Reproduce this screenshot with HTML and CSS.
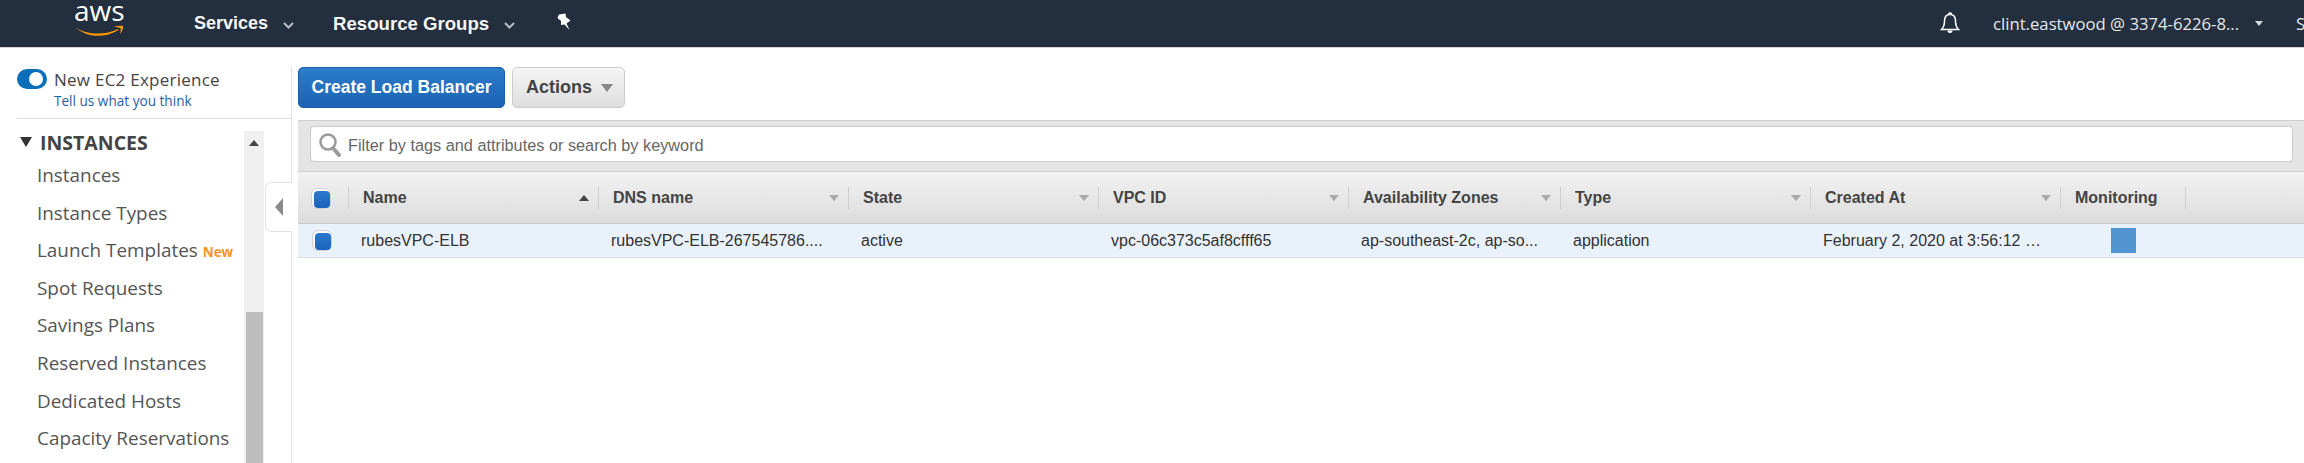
FILE: index.html
```html
<!DOCTYPE html>
<html lang="en">
<head>
	<meta charset="UTF-8">
	<title>Load Balancers</title>
	<link rel="stylesheet" href="styles.css">
</head>
<body>
	<div class="topNav">
		<div class="awsLogo">
			<span class="awsWord">aws</span>
			<svg class="awsSmile" width="50" height="11" viewBox="0 0 50 11"><path d="M0 1.500C8 7 16 8.500 24 8.500C31 8.500 38 7 44 4L44.500 5C38 9 31 10.800 24 10.800C15 10.800 7 7.500 0 1.500Z" fill="#f90"/><path d="M40 1.500C43 .8 47 .5 49 1C49.500 3 48 7 46 9C46.500 7 47 4.500 46.500 3C45 2.500 42.500 2 40 1.500Z" fill="#f90"/></svg>
		</div>
		<a class="navLink navServices">Services</a>
		<svg class="navChevron" width="11" height="7" viewBox="0 0 11 7"><path d="M1 1L5.500 5.500L10 1" fill="none" stroke="#b9bec5" stroke-width="2"/></svg>
		<a class="navLink navGroups">Resource Groups</a>
		<svg class="navChevron" width="11" height="7" viewBox="0 0 11 7"><path d="M1 1L5.500 5.500L10 1" fill="none" stroke="#b9bec5" stroke-width="2"/></svg>
		<svg class="navPin" width="16" height="18" viewBox="0 0 16 18"><path d="M3 1.500L9.500 .5L10 4L14.500 7.500L10.500 10.500L13.500 17L8.500 11.500L5 12L5 8L1.500 5Z" fill="#fff"/></svg>
		<div class="navRight">
			<svg class="navBell" width="20" height="22" viewBox="0 0 20 22"><path d="M10 2.500C6 2.500 4.500 5.500 4.500 9C4.500 13 3.500 15.500 1.500 17.500L18.500 17.500C16.500 15.500 15.500 13 15.500 9C15.500 5.500 14 2.500 10 2.500Z" fill="none" stroke="#fff" stroke-width="1.500"/><path d="M8.500 2.500A1.500 1.500 0 0 1 11.500 2.500" fill="none" stroke="#fff" stroke-width="1.500"/><path d="M7.500 18.500A2.500 2.500 0 0 0 12.500 18.500Z" fill="#fff"/></svg>
			<span class="navUser">clint.eastwood @ 3374-6226-8...</span>
			<i class="navCaret"></i>
			<span class="navCut">S</span>
		</div>
	</div>
	<div class="main">
		<div class="sideBar">
			<div class="expBox">
				<i class="expToggle"></i>
				<div>
					<div class="expTitle">New EC2 Experience</div>
					<a class="expLink">Tell us what you think</a>
				</div>
			</div>
			<div class="menuWrap">
				<div class="menuList">
					<div class="menuHead"><i class="menuArrow"></i>INSTANCES</div>
					<a class="menuItem">Instances</a>
					<a class="menuItem">Instance Types</a>
					<a class="menuItem">Launch Templates <b class="newTag">New</b></a>
					<a class="menuItem">Spot Requests</a>
					<a class="menuItem">Savings Plans</a>
					<a class="menuItem">Reserved Instances</a>
					<a class="menuItem">Dedicated Hosts</a>
					<a class="menuItem">Capacity Reservations</a>
				</div>
				<div class="scrollBar">
					<i class="scrollUp"></i>
					<div class="scrollThumb"></div>
				</div>
			</div>
			<div class="collapseTab"><i></i></div>
		</div>
		<div class="content">
			<div class="toolBar">
				<button class="btnPrimary">Create Load Balancer</button>
				<button class="btnActions">Actions<i></i></button>
			</div>
			<div class="filterBar">
				<div class="filterInput">
					<svg width="24" height="26" viewBox="0 0 24 26"><circle cx="10" cy="10" r="7.500" fill="none" stroke="#9a9a9a" stroke-width="2.500"/><path d="M15 16L21 23" stroke="#9a9a9a" stroke-width="4" stroke-linecap="round"/></svg>
					<span>Filter by tags and attributes or search by keyword</span>
				</div>
			</div>
			<div class="tableHead">
				<div class="cell colCheck"><i class="checkBox"></i></div>
				<div class="cell col250"><span>Name</span><i class="sortUp"></i></div>
				<div class="cell col250"><span>DNS name</span><i class="sortDown"></i></div>
				<div class="cell col250"><span>State</span><i class="sortDown"></i></div>
				<div class="cell col250"><span>VPC ID</span><i class="sortDown"></i></div>
				<div class="cell col212"><span>Availability Zones</span><i class="sortDown"></i></div>
				<div class="cell col250"><span>Type</span><i class="sortDown"></i></div>
				<div class="cell col250"><span>Created At</span><i class="sortDown"></i></div>
				<div class="cell col125"><span>Monitoring</span></div>
			</div>
			<div class="tableRow">
				<div class="cell colCheck"><i class="checkBox"></i></div>
				<div class="cell col250">rubesVPC-ELB</div>
				<div class="cell col250">rubesVPC-ELB-267545786....</div>
				<div class="cell col250">active</div>
				<div class="cell col250">vpc-06c373c5af8cfff65</div>
				<div class="cell col212">ap-southeast-2c, ap-so...</div>
				<div class="cell col250">application</div>
				<div class="cell col250">February 2, 2020 at 3:56:12 …</div>
				<div class="cell col125"><i class="monitorBox"></i></div>
			</div>
		</div>
	</div>
</body>
</html>
```

FILE: styles.css
```css
*{margin:0;padding:0;box-sizing:border-box;}
html,body{height:463px;overflow:hidden;background:#fff;}
body{font-family:"Liberation Sans",Arial,sans-serif;color:#444;}
i{display:block;}

.topNav{height:48px;background:#232f3e;border-bottom:1px solid #d5d8db;display:flex;align-items:center;color:#fff;}
.awsLogo{width:51px;height:47px;margin-left:74px;position:relative;}
.awsWord{display:block;font-family:"Open Sans",sans-serif;font-size:28px;line-height:20px;}
.awsSmile{position:absolute;left:0;top:25px;}
.navLink{font-size:18px;font-weight:bold;color:#f4f5f6;}
.navServices{margin-left:69px;}
.navGroups{margin-left:39px;font-size:18.600px;}
.navChevron{margin-left:15px;margin-top:3px;}
.navPin{margin-left:41px;margin-top:-4px;}
.navRight{margin-left:auto;display:flex;align-items:center;}
.navBell{margin-top:-2px;}
.navUser{margin-left:33px;font-family:"Open Sans",sans-serif;font-size:16.700px;color:#e6e8ea;width:246px;white-space:nowrap;}
.navCaret{margin-left:16px;border:4px solid transparent;border-top:5px solid #d5d8db;border-bottom:0;}
.navCut{margin-left:33px;width:8px;overflow:hidden;font-family:"Open Sans",sans-serif;font-size:16.700px;color:#e6e8ea;}

.main{display:flex;height:415px;}

.sideBar{width:292px;flex:none;border-right:1px solid #e1e1e1;position:relative;margin-top:19px;}
.expBox{margin-left:17px;height:52px;border-bottom:1px solid #ddd;display:flex;gap:7px;padding-top:2px;}
.expToggle{width:30px;height:20px;border-radius:10px;background:#0a6fb8;position:relative;flex:none;}
.expToggle:after{content:"";position:absolute;right:4px;top:3px;width:14px;height:14px;border-radius:50%;background:#fff;}
.expTitle{font-family:"Open Sans",sans-serif;font-size:17px;letter-spacing:.25px;line-height:22px;color:#444;}
.expLink{display:block;font-family:"Open Sans",sans-serif;font-size:13.600px;line-height:20px;color:#1f5fa8;}
.menuWrap{display:flex;margin-top:12px;height:332px;}
.menuList{width:244px;}
.menuHead{display:flex;align-items:center;height:22px;margin-left:20px;font-family:"Open Sans",sans-serif;font-size:19.500px;font-weight:bold;color:#444;}
.menuArrow{border:6px solid transparent;border-top:10px solid #333;border-bottom:0;margin-right:8px;}
.menuItem{display:block;margin-left:37px;height:37.600px;line-height:37.600px;font-family:"Open Sans",sans-serif;font-size:18.900px;color:#555;white-space:nowrap;}
.menuHead+.menuItem{margin-top:4px;}
.newTag{font-size:13.500px;color:#f7931e;}
.scrollBar{width:20px;background:#f0f0f0;position:relative;}
.scrollUp{position:absolute;left:5px;top:9px;border:5px solid transparent;border-top:0;border-bottom:6px solid #444;}
.scrollThumb{position:absolute;left:2px;right:1px;top:181px;bottom:0;background:#bdbdbd;}
.collapseTab{position:absolute;right:-1px;top:115px;width:27px;height:50px;background:#fff;border:1px solid #e1e1e1;border-right:0;border-radius:6px 0 0 6px;display:flex;align-items:center;justify-content:center;}
.collapseTab i{border:9px solid transparent;border-left:0;border-right:8px solid #8a8a8a;}

.content{flex:1;padding-left:6px;min-width:0;}
.toolBar{height:72px;padding-top:19px;display:flex;gap:7px;align-items:flex-start;}
.btnPrimary{width:207px;height:41px;border:1px solid #1a5fa8;border-radius:5px;background:linear-gradient(#2b7cc9,#1b63b4);color:#fff;font-family:inherit;font-size:17.500px;font-weight:bold;}
.btnActions{width:113px;height:41px;border:1px solid #ccc;border-radius:5px;background:linear-gradient(#f5f5f5,#dedede);color:#444;font-family:inherit;font-size:18px;font-weight:bold;display:flex;align-items:center;padding-left:13px;}
.btnActions i{margin-left:9px;border:6px solid transparent;border-top:8px solid #888;border-bottom:0;}
.filterBar{height:52px;background:#e4e4e4;border-top:1px solid #cfcfcf;padding:5px 11px 0 12px;border-bottom:1px solid #cfcfcf;}
.filterInput{height:36px;background:#fff;border:1px solid #ccc;border-radius:4px;display:flex;align-items:center;padding-left:7px;gap:6px;font-size:16.300px;color:#666;}
.filterInput svg{margin-top:2px;}
.filterInput span{margin-top:2px;}

.tableHead{display:flex;height:52px;background:linear-gradient(#f2f2f2,#dcdcdc);border-bottom:1px solid #c9c9c9;font-size:16px;font-weight:bold;color:#444;}
.tableRow{display:flex;height:34px;background:#e9f1fb;border-bottom:1px solid #d9dde2;font-size:16px;color:#333;}
.cell{flex:none;display:flex;align-items:center;white-space:nowrap;}
.colCheck{width:51px;padding-left:14px;}
.col250{width:250px;}
.col212{width:212px;}
.col125{width:125px;}
.tableHead .cell{height:22px;margin-top:15px;border-right:1px solid #cfcfcf;padding-left:14px;justify-content:space-between;padding-right:9px;}
.tableHead .colCheck{padding-left:13px;}
.tableRow .cell{height:33px;padding-left:12px;}
.tableRow .colCheck{padding-left:14px;}
.tableRow .col125{padding-left:50px;}
.checkBox{width:20px;height:21px;flex:none;border-radius:6px;background:#fafafa;border:1px solid #d2d2d2;display:flex;justify-content:flex-end;align-items:flex-end;}
.checkBox:after{content:"";width:16px;height:17px;border-radius:4px;background:linear-gradient(#2a7ad0,#1a63bb);}
.sortUp{border:5px solid transparent;border-top:0;border-bottom:6px solid #444;}
.sortDown{border:5px solid transparent;border-bottom:0;border-top:6px solid #aaa;}
.monitorBox{width:25px;height:25px;background:#5294d0;}
```
